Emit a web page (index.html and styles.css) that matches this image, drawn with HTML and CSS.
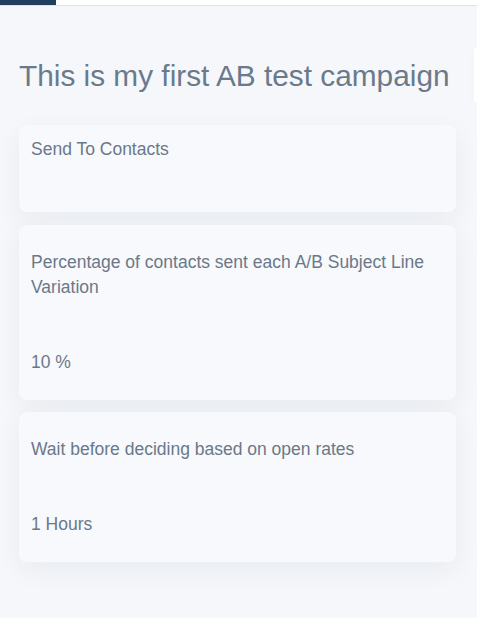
FILE: index.html
```html
<!DOCTYPE html>
<html lang="en">
<head>
<meta charset="utf-8">
<title>AB test campaign</title>
<link rel="stylesheet" href="styles.css">
</head>
<body>
<div class="topbar"><div class="topbar-tab"></div></div>
<div class="layout">
  <main class="main">
    <h1 class="title">This is my first AB test campaign</h1>
    <section class="card card--compact">
      <div class="label">Send To Contacts</div>
    </section>
    <section class="card">
      <div class="label">Percentage of contacts sent each A/B Subject Line Variation</div>
      <div class="value">10 %</div>
    </section>
    <section class="card">
      <div class="label">Wait before deciding based on open rates</div>
      <div class="value">1 Hours</div>
    </section>
  </main>
  <aside class="side"></aside>
</div>
</body>
</html>
```
FILE: styles.css
```css
html, body {
  margin: 0;
  padding: 0;
  overflow: hidden;
}
body {
  background: #f5f7fa;
  font-family: "Liberation Sans", Arial, sans-serif;
  color: #6b7888;
  height: 618px;
}
.topbar {
  height: 5px;
  background: #ffffff;
  border-bottom: 1px solid #dfe2e6;
}
.topbar-tab {
  width: 56px;
  height: 5px;
  background: #213f5e;
}
.layout {
  display: flex;
  align-items: flex-start;
}
.main {
  flex: 0 0 437px;
  padding: 0 18px 0 19px;
}
.title {
  margin: 54px 0 0;
  font-size: 29.8px;
  font-weight: 400;
  line-height: 32px;
  color: #6b7a8b;
}
.card {
  margin-top: 33px;
  background: #f7f9fc;
  border-radius: 8px;
  padding: 25px 12px 25px 12px;
  box-shadow: 0 8px 26px rgba(30, 50, 80, 0.06);
  font-size: 17.5px;
  line-height: 25px;
}
.card + .card {
  margin-top: 12.5px;
}
.card--compact {
  padding: 12px 12px 50px;
}
.label {
  color: #6b7888;
}
.value {
  margin-top: 50px;
  color: #6b7888;
}
.side {
  flex: 1 1 auto;
  height: 55px;
  margin-top: 42px;
  background: #ffffff;
  border-radius: 6px 0 0 6px;
  box-shadow: 0 2px 10px rgba(30, 50, 80, 0.04);
}
```
